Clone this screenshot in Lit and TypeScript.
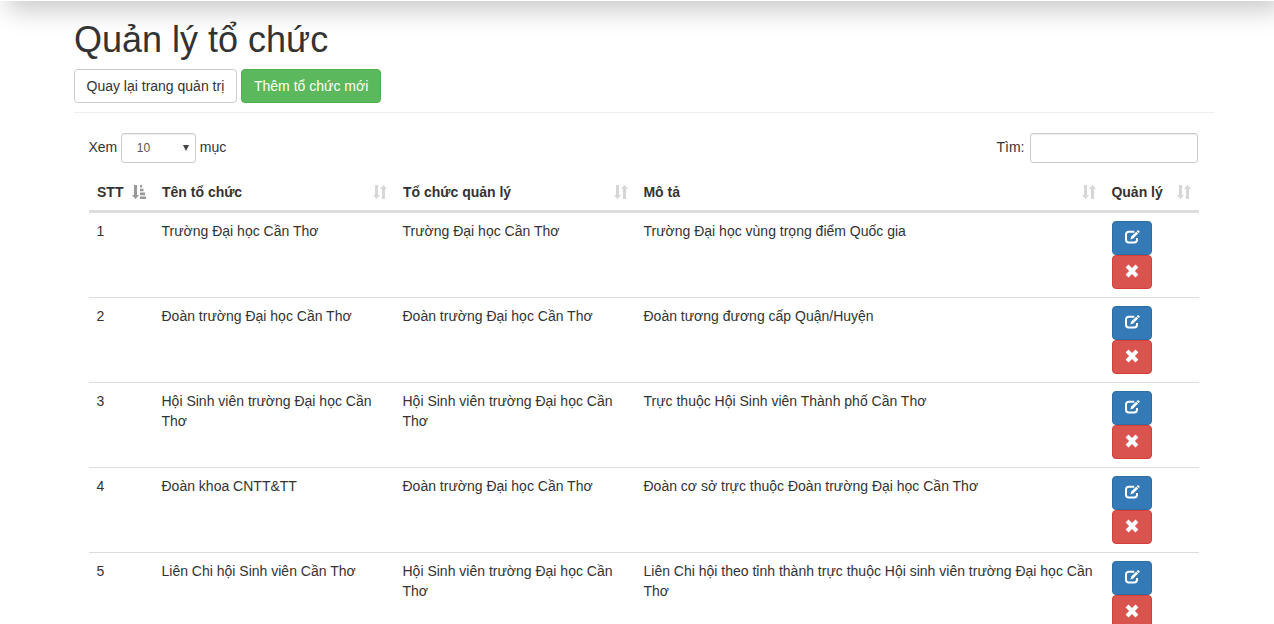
import { LitElement, html, css, svg } from "lit";
import { customElement, property } from "lit/decorators.js";

interface Org {
  name: string;
  parent: string;
  description: string;
}

const ORGS: Org[] = [
  { name: "Trường Đại học Cần Thơ", parent: "Trường Đại học Cần Thơ", description: "Trường Đại học vùng trọng điểm Quốc gia" },
  { name: "Đoàn trường Đại học Cần Thơ", parent: "Đoàn trường Đại học Cần Thơ", description: "Đoàn tương đương cấp Quận/Huyện" },
  { name: "Hội Sinh viên trường Đại học Cần Thơ", parent: "Hội Sinh viên trường Đại học Cần Thơ", description: "Trực thuộc Hội Sinh viên Thành phố Cần Thơ" },
  { name: "Đoàn khoa CNTT&TT", parent: "Đoàn trường Đại học Cần Thơ", description: "Đoàn cơ sở trực thuộc Đoàn trường Đại học Cần Thơ" },
  { name: "Liên Chi hội Sinh viên Cần Thơ", parent: "Hội Sinh viên trường Đại học Cần Thơ", description: "Liên Chi hội theo tỉnh thành trực thuộc Hội sinh viên trường Đại học Cần Thơ" },
];

const COLUMNS = ["STT", "Tên tổ chức", "Tổ chức quản lý", "Mô tả", "Quản lý"];

@customElement("ui-icon")
export class UiIcon extends LitElement {
  @property() name = "";

  static styles = css`
    :host { display: inline-block; width: 14px; height: 14px; }
    svg { display: block; width: 100%; height: 100%; overflow: visible; }
  `;

  private shape() {
    switch (this.name) {
      case "edit":
        return svg`
          <path d="M9.300 1.700H3.700A2.700 2.700 0 0 0 1 4.400V9.800A2.700 2.700 0 0 0 3.700 12.500H9.300A2.700 2.700 0 0 0 12 9.800V8" fill="none" stroke="currentColor" stroke-width="2"/>
          <path d="M5.400 9.500 6.200 6.500 11.200 1.700 13.200 3.600 8.200 8.500Z" fill="currentColor"/>
          <path d="M11.700 1.200 12.600.300Q13 0 13.400.300L14.500 1.300Q14.900 1.800 14.500 2.300L13.700 3.100Z" fill="currentColor"/>`;
      case "remove":
        return svg`<path d="M.600 3.500 3.500.600 7 4.100 10.500.600 13.400 3.500 9.900 7 13.400 10.500 10.500 13.400 7 9.900 3.500 13.400.600 10.500 4.100 7Z" fill="currentColor"/>`;
      case "sort-asc":
        return svg`<path d="M2 0H5V10H7L3.500 14 0 10H2ZM8 0H10V2.500H8ZM8 3.700H11.500V6.300H8ZM8 7.600H13V10.200H8ZM8 11.400H14V14H8Z" fill="currentColor"/>`;
      default:
        return svg`<path d="M2 0H5V10H7L3.500 14 0 10H2ZM9 14H12V4H14L10.500 0 7 4H9Z" fill="currentColor"/>`;
    }
  }

  render() {
    return html`<svg viewBox="0 0 14 14" aria-hidden="true">${this.shape()}</svg>`;
  }
}

@customElement("app-root")
export class AppRoot extends LitElement {
  static styles = css`
    :host {
      display: block;
      height: 624px;
      overflow: hidden;
      background: #fff;
      color: #333;
      font: 14px/20px "Liberation Sans", Arial, sans-serif;
    }
    * { box-sizing: border-box; }
    .navbar { height: 52px; margin-top: -51px; background: #fff; box-shadow: 8px 10px 24px #ccc; }
    .container { width: 1140px; margin-left: 74px; }
    h1 { margin: 0; padding-top: 19px; font-size: 36px; line-height: 39px; font-weight: 400; }
    .actions { display: flex; gap: 4px; padding-top: 10px; }
    .btn {
      display: block;
      height: 34px;
      padding: 6px 12px;
      font: inherit;
      border: 1px solid transparent;
      border-radius: 4px;
      white-space: nowrap;
    }
    .default { color: #333; background: #fff; border-color: #ccc; width: 163px; padding: 6px 11.5px; text-align: left; }
    .success { color: #fff; background: #5cb85c; border-color: #4cae4c; width: 140px; }
    .primary { color: #fff; background: #337ab7; border-color: #2e6da4; }
    .danger { color: #fff; background: #d9534f; border-color: #d43f3a; }
    .rule { height: 1px; margin-top: 9px; background: #eee; }
    .panel { padding: 20px 15px 0; }
    .tools { display: flex; justify-content: space-between; padding-right: 1px; }
    .tools label { display: flex; align-items: center; height: 30px; }
    .tools label:first-child { margin-left: -0.6px; }
    .caption { padding-bottom: 2px; }
    .field {
      height: 30px;
      border: 1px solid #ccc;
      border-radius: 3px;
      background: #fff;
      box-shadow: inset 0 1px 1px rgba(0, 0, 0, 0.075);
      font: 12px/18px "Liberation Sans", Arial, sans-serif;
      color: #555;
    }
    .length { display: flex; align-items: center; justify-content: space-between; width: 75px; margin: 0 4px 0 3.600px; padding: 0 6px 0 15px; }
    .caret { border: 3px solid transparent; border-top: 6px solid #444; border-bottom: 0; }
    .search { width: 168px; margin-left: 5.500px; }
    table { width: 1110px; margin-top: 10px; border-collapse: separate; border-spacing: 0; table-layout: fixed; }
    th { height: 40px; padding: 1px 8px 0; text-align: left; border-bottom: 3px solid #ddd; }
    .head { display: flex; align-items: center; justify-content: space-between; }
    .head ui-icon { color: #d6d6d6; }
    .head .sorted { color: #999; }
    td { height: 85px; padding: 8px 8px 8px 7.5px; vertical-align: top; border-bottom: 1px solid #ddd; }
    td:last-child { padding-left: 8px; }
    .c0 { width: 65px; }
    .c1, .c2 { width: 241px; }
    .c3 { width: 468px; }
    .c3 .head, .c4 .head { margin-left: -0.600px; }
    .c4 { width: 95px; }
    .row-actions { display: flex; flex-direction: column; }
    .row-actions .btn { width: 40px; }
    .row-actions ui-icon { display: block; margin: 0 0 2px -0.500px; }
  `;

  render() {
    return html`
      <div class="navbar"></div>
      <main class="container">
        <h1>Quản lý tổ chức</h1>
        <div class="actions">
          <button class="btn default">Quay lại trang quản trị</button>
          <button class="btn success">Thêm tổ chức mới</button>
        </div>
        <div class="rule"></div>
        <section class="panel">
          <div class="tools">
            <label><span class="caption">Xem</span><span class="field length">10 <span class="caret"></span></span><span class="caption">mục</span></label>
            <label><span class="caption">Tìm:</span><input class="field search" /></label>
          </div>
          <table>
            <thead>
              <tr>
                ${COLUMNS.map((title, i) => html`<th class="c${i}">
                  <div class="head">${title}<ui-icon class=${i ? "" : "sorted"} name=${i ? "sort" : "sort-asc"}></ui-icon></div>
                </th>`)}
              </tr>
            </thead>
            <tbody>
              ${ORGS.map((org, i) => html`<tr>
                <td>${i + 1}</td>
                <td>${org.name}</td>
                <td>${org.parent}</td>
                <td>${org.description}</td>
                <td>
                  <div class="row-actions">
                    <button class="btn primary"><ui-icon name="edit"></ui-icon></button>
                    <button class="btn danger"><ui-icon name="remove"></ui-icon></button>
                  </div>
                </td>
              </tr>`)}
            </tbody>
          </table>
        </section>
      </main>
    `;
  }
}
